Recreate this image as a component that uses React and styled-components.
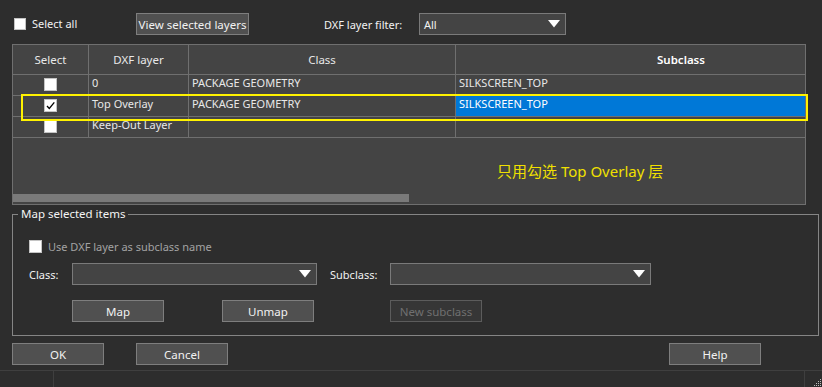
import React from 'react';
import styled, { createGlobalStyle } from 'styled-components';

const Global = createGlobalStyle`
  html, body { margin: 0; padding: 0; background: #2d2d2d; }
  body {
    font-family: "Noto Sans", "Open Sans", sans-serif;
    font-size: 11px;
    color: #e8e8e8;
  }
  * { box-sizing: border-box; }
`;

const Dialog = styled.div`
  width: 822px;
  height: 387px;
  display: flex;
  flex-direction: column;
  background: #2d2d2d;
  overflow: hidden;
`;

const TopBar = styled.div`
  display: flex;
  align-items: center;
  height: 22px;
  margin: 13px 0 0 14px;
`;

const CheckLabel = styled.label`
  display: flex;
  align-items: center;
  gap: 6px;
  width: ${p => (p.$width ? `${p.$width}px` : 'auto')};
  color: ${p => (p.$disabled ? '#a3a3a3' : '#f2f2f2')};
  line-height: 16px;
  white-space: nowrap;
`;

const Box = styled.span`
  flex: none;
  display: inline-flex;
  align-items: center;
  justify-content: center;
  width: ${p => p.$size}px;
  height: ${p => p.$size}px;
  background: #ffffff;
  border: 1px solid #c4c4c4;
`;

const Button = styled.button`
  flex: none;
  height: 22px;
  width: ${p => p.$width}px;
  margin-left: ${p => p.$ml || 0}px;
  padding: 0;
  font: inherit;
  font-size: 11.5px;
  color: ${p => (p.$disabled ? '#707070' : '#f2f2f2')};
  background: ${p => (p.$disabled ? '#363636' : '#505050')};
  border: 1px solid ${p => (p.$disabled ? '#5c5c5c' : '#7e7e7e')};
  white-space: nowrap;
`;

const Label = styled.span`
  flex: none;
  width: ${p => p.$width}px;
  margin-left: ${p => p.$ml || 0}px;
  color: #f2f2f2;
  white-space: nowrap;
`;

const Combo = styled.div`
  flex: none;
  display: flex;
  align-items: center;
  justify-content: space-between;
  height: 22px;
  width: ${p => p.$width}px;
  padding: 0 5px 0 4px;
  background: #444444;
  border: 1px solid #7a7a7a;
  color: #f2f2f2;
`;

const Arrow = () => (
  <svg width="12" height="8" viewBox="0 0 12 8">
    <path d="M0 0 H12 L6 7.5 Z" fill="#ffffff" />
  </svg>
);

const Table = styled.div`
  position: relative;
  margin: 9px 0 0 12px;
  width: 794px;
  height: 161px;
  display: flex;
  flex-direction: column;
  background: #444444;
  border: 1px solid #6f6f6f;
`;

const Grid = styled.div`
  display: grid;
  grid-template-columns: 76px 100px 267px 349px;
`;

const HeadCell = styled.div`
  height: 30px;
  display: flex;
  align-items: center;
  justify-content: ${p => (p.$offset ? 'flex-start' : 'center')};
  padding-left: ${p => p.$offset || 0}px;
  border-bottom: 1px solid #6f6f6f;
  border-right: ${p => (p.$last ? 'none' : '1px solid #6f6f6f')};
  color: ${p => (p.$sorted ? '#ffffff' : '#e8e8e8')};
  font-size: 11.5px;
  font-weight: ${p => (p.$sorted ? 600 : 400)};
`;

const Cell = styled.div`
  height: 21px;
  display: flex;
  align-items: flex-start;
  justify-content: ${p => (p.$center ? 'center' : 'flex-start')};
  padding: ${p => (p.$center ? '3px 0 0 0' : '0 0 0 3px')};
  line-height: 15px;
  border-bottom: 1px solid #6f6f6f;
  border-right: ${p => (p.$last ? 'none' : '1px solid #6f6f6f')};
  background: ${p => (p.$selected ? '#0078d7' : 'transparent')};
  color: ${p => (p.$selected ? '#ffffff' : '#e8e8e8')};
  white-space: nowrap;
  overflow: visible;
`;

const ScrollTrack = styled.div`
  margin-top: auto;
  margin-bottom: 1px;
  height: 9px;
`;

const ScrollThumb = styled.div`
  width: 396px;
  height: 8px;
  background: #7a7a7a;
`;

const Highlight = styled.div`
  position: absolute;
  left: 8px;
  top: 49px;
  width: 787px;
  height: 27px;
  border: 2px solid #fff200;
  pointer-events: none;
`;

const Note = styled.div`
  position: absolute;
  left: 484px;
  top: 116px;
  font-family: "Noto Sans", "Noto Sans CJK SC", sans-serif;
  font-size: 15px;
  line-height: 20px;
  color: #f0e000;
  white-space: nowrap;
`;

const Group = styled.div`
  position: relative;
  margin: 9px 0 0 12px;
  width: 807px;
  height: 122px;
  border: 1px solid #858585;
  display: flex;
  flex-direction: column;
  padding: 25px 0 0 16px;
`;

const Legend = styled.span`
  position: absolute;
  left: 5px;
  top: -9px;
  padding: 0 3px;
  line-height: 16px;
  font-size: 11.5px;
  background: #2d2d2d;
  color: #f4f4f4;
  white-space: nowrap;
`;

const Row = styled.div`
  display: flex;
  align-items: center;
  height: ${p => p.$h}px;
  margin-top: ${p => p.$mt || 0}px;
  margin-left: ${p => p.$ml || 0}px;
`;

const StatusBar = styled.div`
  margin-top: auto;
  height: 17px;
  display: flex;
  border-top: 1px solid #3f3f3f;
`;

const StatusPane = styled.div`
  flex: ${p => (p.$grow ? 1 : 'none')};
  width: ${p => (p.$width ? `${p.$width}px` : 'auto')};
  border-right: ${p => (p.$sep ? '1px solid #3f3f3f' : 'none')};
  display: flex;
  align-items: flex-end;
  justify-content: flex-end;
`;

const Grip = () => (
  <svg width="10" height="10" viewBox="0 0 10 10">
    {[[8, 2], [6, 4], [8, 4], [4, 6], [6, 6], [8, 6], [2, 8], [4, 8], [6, 8], [8, 8]].map(([x, y]) => (
      <rect key={`${x}-${y}`} x={x} y={y} width="1" height="1" fill="#bdbdbd" />
    ))}
  </svg>
);

const CheckMark = () => (
  <svg width="11" height="11" viewBox="0 0 11 11">
    <path d="M2 6 L4.3 8.5 L9.3 2.3" fill="none" stroke="#000" strokeWidth="1.3" />
  </svg>
);

const rows = [
  { checked: false, layer: '0', cls: 'PACKAGE GEOMETRY', sub: 'SILKSCREEN_TOP' },
  { checked: true, layer: 'Top Overlay', cls: 'PACKAGE GEOMETRY', sub: 'SILKSCREEN_TOP', selected: true },
  { checked: false, layer: 'Keep-Out Layer', cls: '', sub: '' },
];

export default function App() {
  return (
    <Dialog>
      <Global />
      <TopBar>
        <CheckLabel $width={122}>
          <Box $size={12} />
          Select all
        </CheckLabel>
        <Button $width={113}>View selected layers</Button>
        <Label $width={95} $ml={75}>DXF layer filter:</Label>
        <Combo $width={147}>
          <span>All</span>
          <Arrow />
        </Combo>
      </TopBar>

      <Table>
        <Grid>
          <HeadCell>Select</HeadCell>
          <HeadCell>DXF layer</HeadCell>
          <HeadCell>Class</HeadCell>
          <HeadCell $last $sorted $offset={201}>Subclass</HeadCell>
          {rows.map((r, i) => (
            <React.Fragment key={i}>
              <Cell $center>
                <Box $size={13}>{r.checked && <CheckMark />}</Box>
              </Cell>
              <Cell>{r.layer}</Cell>
              <Cell>{r.cls}</Cell>
              <Cell $last $selected={r.selected}>{r.sub}</Cell>
            </React.Fragment>
          ))}
        </Grid>
        <ScrollTrack>
          <ScrollThumb />
        </ScrollTrack>
        <Highlight />
        <Note>只用勾选 Top Overlay 层</Note>
      </Table>

      <Group>
        <Legend>Map selected items</Legend>
        <Row $h={13}>
          <CheckLabel $disabled>
            <Box $size={13} />
            Use DXF layer as subclass name
          </CheckLabel>
        </Row>
        <Row $h={22} $mt={10}>
          <Label $width={43}>Class:</Label>
          <Combo $width={245}>
            <span />
            <Arrow />
          </Combo>
          <Label $width={60} $ml={13}>Subclass:</Label>
          <Combo $width={261}>
            <span />
            <Arrow />
          </Combo>
        </Row>
        <Row $h={22} $mt={15}>
          <Button $width={92} $ml={43}>Map</Button>
          <Button $width={92} $ml={58}>Unmap</Button>
          <Button $width={92} $ml={76} $disabled>New subclass</Button>
        </Row>
      </Group>

      <Row $h={22} $mt={7} $ml={12}>
        <Button $width={92}>OK</Button>
        <Button $width={92} $ml={32}>Cancel</Button>
        <Button $width={92} $ml={441}>Help</Button>
      </Row>

      <StatusBar>
        <StatusPane $width={54} $sep />
        <StatusPane $grow $sep />
        <StatusPane $width={17}>
          <Grip />
        </StatusPane>
      </StatusBar>
    </Dialog>
  );
}
